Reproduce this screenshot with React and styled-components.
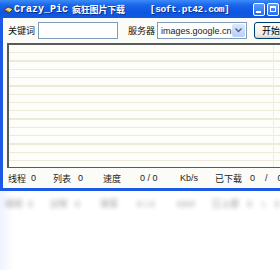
import React from 'react';
import styled, { createGlobalStyle } from 'styled-components';

const GlobalStyle = createGlobalStyle`
	html, body {
		margin: 0;
		padding: 0;
		background: #ffffff;
		overflow: hidden;
	}
	body {
		font-family: "Liberation Sans", "Noto Sans CJK SC", sans-serif;
		font-size: 11px;
		color: #000;
	}
`;

const Page = styled.div`
	width: 280px;
	height: 270px;
	overflow: hidden;
	background: linear-gradient(90deg, #eef3fd 0px, #ffffff 14px);
`;

const Window = styled.div`
	width: 300px;
	background: #fbfbf8;
	border-left: 3px solid #1c5ae6;
	border-bottom: 3px solid #1c5ae6;
	box-sizing: border-box;
`;

const TitleBar = styled.div`
	height: 18px;
	margin-left: -3px;
	display: flex;
	align-items: center;
	background: linear-gradient(180deg, #3b8cf6 0%, #1864ea 30%, #0d56e0 70%, #1259e2 100%);
	color: #fff;
	font-weight: bold;
	padding-left: 3px;
	white-space: nowrap;
	text-shadow: 1px 1px 0 #0b2f88;
`;

const TitleIcon = styled.svg`
	width: 11px;
	height: 11px;
	flex: none;
`;

const TitleMono = styled.span`
	flex: none;
	font-family: "Liberation Mono", monospace;
	font-size: ${p => p.size}px;
	letter-spacing: ${p => p.spacing || 0}px;
	margin-left: ${p => p.gap}px;
	white-space: pre;
`;

const TitleCjk = styled.span`
	flex: none;
	font-family: "Noto Sans CJK SC", sans-serif;
	font-size: 9px;
	letter-spacing: -0.2px;
	margin-left: 4px;
`;

const TitleButtons = styled.div`
	margin-left: auto;
	margin-right: 21px;
	display: flex;
	gap: 2px;
	flex: none;
`;

const CapButton = styled.div`
	width: 12px;
	height: 13px;
	border: 1px solid #ffffff;
	border-radius: 2px;
	background: linear-gradient(180deg, #5c9bfb, #2a6df0);
	position: relative;
	box-sizing: border-box;
	&::after {
		content: '';
		position: absolute;
		${p => p.kind === 'min'
			? 'left: 2px; bottom: 2px; width: 5px; height: 2px; background: #fff;'
			: 'left: 2px; top: 2px; width: 6px; height: 6px; border: 1px solid #fff; border-top-width: 2px; box-sizing: border-box;'}
	}
`;

const Toolbar = styled.div`
	display: flex;
	align-items: center;
	height: 17px;
	margin-top: 4px;
	padding-left: 5px;
	white-space: nowrap;
`;

const Label = styled.span`
	font-family: "Noto Sans CJK SC", sans-serif;
	font-size: 9px;
	width: ${p => p.w}px;
	flex: none;
	color: #111;
`;

const Input = styled.div`
	width: 78px;
	height: 15px;
	flex: none;
	border: 1px solid #7f9db9;
	background: #fff;
	margin-right: 10px;
`;

const Select = styled.div`
	width: 85px;
	height: 15px;
	flex: none;
	border: 1px solid #7f9db9;
	background: #fff;
	display: flex;
	align-items: center;
	padding-left: 3px;
	font-family: "Liberation Sans", sans-serif;
	font-size: 9px;
	color: #222;
`;

const SelectText = styled.span`
	flex: 1;
	overflow: hidden;
`;

const DropButton = styled.div`
	width: 13px;
	height: 13px;
	flex: none;
	margin-right: 1px;
	border-radius: 2px;
	background: linear-gradient(180deg, #dbe8fd, #b7cffa);
	display: flex;
	align-items: center;
	justify-content: center;
`;

const Button = styled.div`
	margin-left: 7px;
	width: 40px;
	height: 17px;
	flex: none;
	border: 1px solid #003c74;
	border-radius: 3px;
	background: linear-gradient(180deg, #ffffff, #ecebe6 80%, #d6d0c5);
	display: flex;
	align-items: center;
	padding-left: 7px;
	font-family: "Noto Sans CJK SC", sans-serif;
	font-size: 9px;
	box-sizing: border-box;
`;

const List = styled.div`
	margin: 4px 0 0 4px;
	height: 125px;
	border-top: 2px solid #5a5a58;
	border-left: 2px solid #5a5a58;
	border-bottom: 1px solid #5a5a58;
	background-color: #fdfdfa;
	background-image:
		linear-gradient(90deg, transparent 264px, #eeeedf 264px, #eeeedf 265px, transparent 265px),
		repeating-linear-gradient(180deg, transparent 0px, transparent 7px, #eceadb 7px, #eceadb 8.3px);
	box-sizing: border-box;
`;

const Status = styled.div`
	display: flex;
	align-items: center;
	height: 20px;
	padding-left: 5px;
	white-space: nowrap;
`;

const Cell = styled.span`
	width: ${p => p.w}px;
	flex: none;
	font-family: ${p => (p.cjk ? '"Noto Sans CJK SC", sans-serif' : '"Liberation Sans", sans-serif')};
	font-size: 9px;
	color: #222;
	white-space: pre;
`;

const Reflection = styled.div`
	transform: scaleY(-1);
	filter: blur(2px);
	opacity: 0.45;
	margin-top: 3px;
`;

const statusCells = [
	{ t: '线程', w: 23, cjk: true },
	{ t: '0', w: 22 },
	{ t: '列表', w: 25, cjk: true },
	{ t: '0', w: 25 },
	{ t: '速度', w: 37, cjk: true },
	{ t: '0 / 0', w: 40 },
	{ t: 'Kb/s', w: 35 },
	{ t: '已下载', w: 35, cjk: true },
	{ t: '0    /    0', w: 40 }
];

function StatusRow() {
	return (
		<Status>
			{statusCells.map((c, i) => (
				<Cell key={i} w={c.w} cjk={c.cjk}>
					{c.t}
				</Cell>
			))}
		</Status>
	);
}

export default function App() {
	return (
		<Page>
			<GlobalStyle />
			<Window>
				<TitleBar>
					<TitleIcon viewBox="0 0 11 11">
						<path d="M1 6 L5 3 L10 5 L6 9 Z" fill="#f4d27a" stroke="#3a2a10" strokeWidth="0.8" />
						<path d="M2 6 L6 8" stroke="#7a4a10" strokeWidth="1" />
					</TitleIcon>
					<TitleMono size={10} gap={0}>Crazy_Pic</TitleMono>
					<TitleCjk>疯狂图片下载</TitleCjk>
					<TitleMono size={9.5} spacing={-0.4} gap={25}>[soft.pt42.com]</TitleMono>
					<TitleButtons>
						<CapButton kind="min" />
						<CapButton kind="max" />
					</TitleButtons>
				</TitleBar>
				<Toolbar>
					<Label w={30}>关键词</Label>
					<Input />
					<Label w={29}>服务器</Label>
					<Select>
						<SelectText>images.google.cn</SelectText>
						<DropButton>
							<svg width="7" height="5" viewBox="0 0 7 5">
								<path d="M0.5 0.5 L3.5 3.5 L6.5 0.5" fill="none" stroke="#4d6185" strokeWidth="1.4" />
							</svg>
						</DropButton>
					</Select>
					<Button>开始</Button>
				</Toolbar>
				<List />
				<StatusRow />
			</Window>
			<Reflection>
				<StatusRow />
			</Reflection>
		</Page>
	);
}
